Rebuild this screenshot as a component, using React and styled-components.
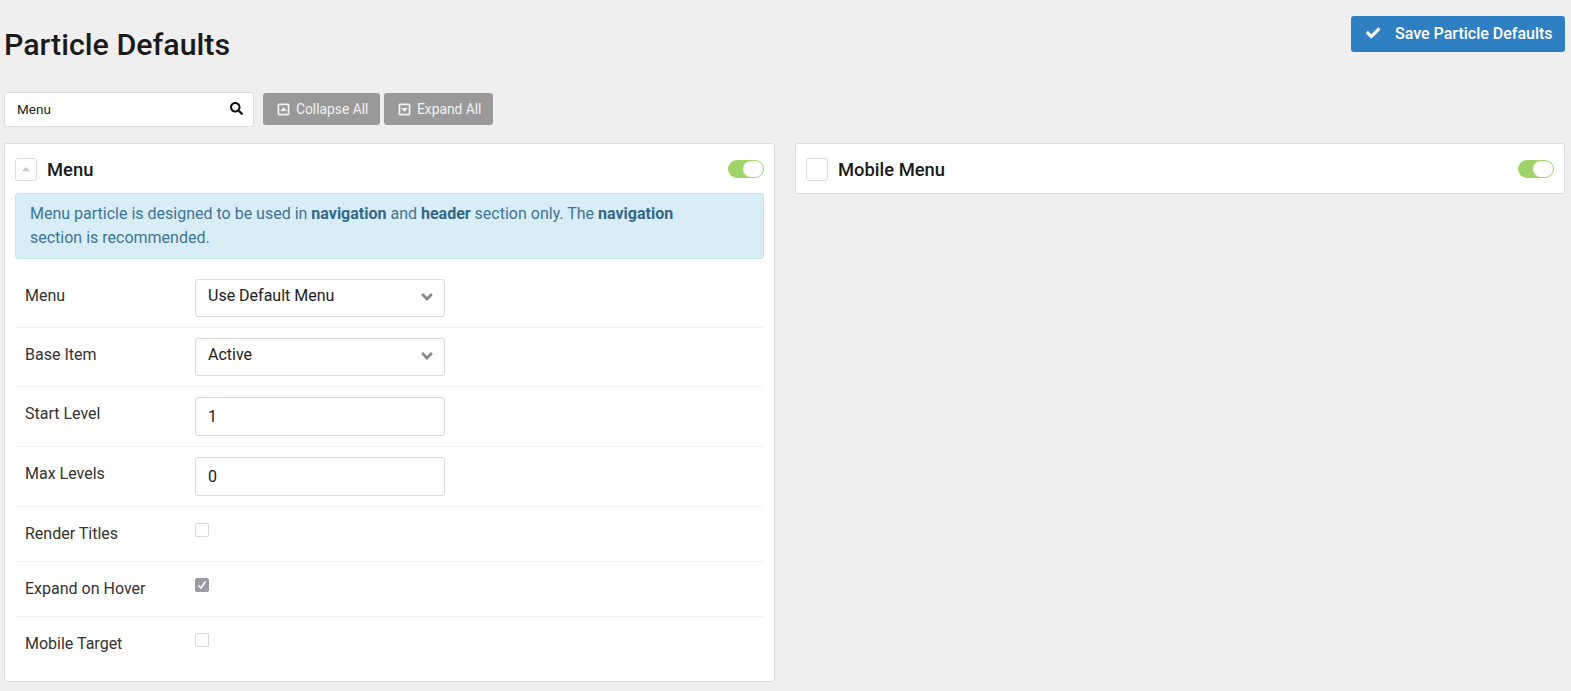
import React from "react";
import styled, { createGlobalStyle } from "styled-components";
import { FaCheck, FaSearch, FaRegCaretSquareUp, FaRegCaretSquareDown, FaCaretUp, FaAngleDown } from "react-icons/fa";

const Global = createGlobalStyle`
  html, body { margin: 0; padding: 0; background: #efefef; }
  body { font-family: Roboto, "Liberation Sans", sans-serif; color: #1a1a1a; }
  * { box-sizing: border-box; }
`;
const Page = styled.div`
  width: 1571px; height: 691px; overflow: hidden; padding: 16px 6px 0 4px;
`;
const TitleBar = styled.header`
  display: flex; justify-content: space-between; align-items: flex-start; height: 76px;
`;
const Title = styled.h1`
  margin: 12px 0 0; font-size: 30.4px; line-height: 34px; font-weight: 500; color: #1a1a1a;
`;
const SaveButton = styled.button`
  display: flex; align-items: center; width: 214px; height: 36px; padding: 0 12px 2px 15px;
  background: #2f7fc3; color: #fff; border: 0; border-radius: 3px;
  font: 500 16px Roboto, sans-serif; white-space: nowrap;
  svg { font-size: 14px; margin-right: 15px; stroke: currentColor; stroke-width: 20; }
`;
const Toolbar = styled.div`
  display: flex; align-items: flex-start; height: 35px; margin-bottom: 16px;
`;
const Search = styled.div`
  display: flex; justify-content: space-between; align-items: center; width: 250px; height: 35px;
  padding: 0 10px 2px 12px; background: #fff; border: 1px solid #dcdcdc; border-radius: 3px;
  font-size: 13.5px; color: #222; margin-right: 9px;
  svg { font-size: 13px; color: #111; }
`;
const GreyButton = styled.button`
  display: flex; align-items: center; gap: 6px; height: 32px; padding: 0 0 0 14px; margin: 1px 4px 0 0;
  width: ${p => p.$w}px; background: #999; color: #f1f1f1; border: 0; border-radius: 3px;
  font: 400 13.8px Roboto, sans-serif; white-space: nowrap;
  svg { font-size: 13px; stroke: currentColor; stroke-width: 20; }
`;
const Columns = styled.div`
  display: grid; grid-template-columns: 771px 770px; column-gap: 20px; align-items: start;
`;
const Panel = styled.section`
  background: #fff; border: 1px solid #dcdcdc; border-radius: 3px; padding: 0 10px;
  height: ${p => p.$h}px;
`;
const PanelHead = styled.div`
  display: flex; align-items: center; height: 49px; padding-top: 1px;
`;
const Collapse = styled.span`
  display: flex; align-items: center; justify-content: center; width: 22px; height: 23px; margin-right: 10px;
  border: 1px solid #ddd; border-radius: 3px; color: #c4c4c4; font-size: 12px;
`;
const PanelTitle = styled.h2`
  flex: 1; margin: 0; font-size: 18.4px; font-weight: 500; color: #1a1a1a;
`;
const Toggle = styled.span`
  position: relative; display: block; width: 36px; height: 18px; border-radius: 9px; background: #a0d468; margin-top: -1px;
  &::after {
    content: ""; position: absolute; right: 1px; top: 1px; width: 20px; height: 16px; border-radius: 8px; background: #fff;
  }
`;
const Alert = styled.div`
  height: 66px; padding: 8px 14px; background: #d8edf6; border: 1px solid #c6e4ea; border-radius: 3px;
  color: #3f7595; font-size: 16px; line-height: 24px;
  b { font-weight: 700; color: #33688a; }
`;
const Fields = styled.div`
  margin-top: 9px;
`;
const Row = styled.div`
  display: grid; grid-template-columns: 170px 1fr; align-items: start; padding: 0 0 0 10px;
  height: ${p => p.$h}px; padding-top: ${p => p.$top}px;
  border-bottom: ${p => (p.$last ? "0" : "1px solid #f1f1f1")};
`;
const Label = styled.label`
  font-size: 16px; line-height: 20px; color: #333; padding-top: ${p => p.$pt}px;
`;
const Field = styled.div`
  display: flex; align-items: ${p => (p.$sel ? "flex-start" : "center")}; justify-content: space-between;
  width: 250px; height: ${p => (p.$sel ? 38 : 39)}px; padding: ${p => (p.$sel ? "6px 8px 0 12px" : "0 12px")};
  border: 1px solid #d9d9d9; border-radius: 3px; background: #fff; font-size: 16px; color: #222;
  svg { font-size: 18px; color: #8a8a8a; margin-top: 2px; }
`;
const Check = styled.span`
  display: flex; align-items: center; justify-content: center; width: 14px; height: 14px; margin-top: 6px;
  border: 1px solid ${p => (p.$on ? "#9b9ba6" : "#d9d9d9")}; border-radius: 2px;
  background: ${p => (p.$on ? "#9b9ba6" : "#fff")};
  svg { width: 10px; height: 10px; fill: none; stroke: #fff; stroke-width: 1.6; }
`;

const rows = [
  { label: "Menu", h: 60, top: 11, pt: 7, sel: "Use Default Menu" },
  { label: "Base Item", h: 59, top: 10, pt: 7, sel: "Active" },
  { label: "Start Level", h: 60, top: 10, pt: 7, val: "1" },
  { label: "Max Levels", h: 60, top: 10, pt: 7, val: "0" },
  { label: "Render Titles", h: 55, top: 10, pt: 7, check: false },
  { label: "Expand on Hover", h: 55, top: 10, pt: 7, check: true },
  { label: "Mobile Target", h: 55, top: 10, pt: 7, check: false, last: true },
];

export default function App() {
  return (
    <Page>
      <Global />
      <TitleBar>
        <Title>Particle Defaults</Title>
        <SaveButton><FaCheck />Save Particle Defaults</SaveButton>
      </TitleBar>
      <Toolbar>
        <Search>Menu<FaSearch /></Search>
        <GreyButton $w={117}><FaRegCaretSquareUp />Collapse All</GreyButton>
        <GreyButton $w={109}><FaRegCaretSquareDown />Expand All</GreyButton>
      </Toolbar>
      <Columns>
        <Panel $h={539}>
          <PanelHead>
            <Collapse><FaCaretUp /></Collapse>
            <PanelTitle>Menu</PanelTitle>
            <Toggle />
          </PanelHead>
          <Alert>
            Menu particle is designed to be used in <b>navigation</b> and <b>header</b> section only. The <b>navigation</b><br />
            section is recommended.
          </Alert>
          <Fields>
            {rows.map(r => (
              <Row key={r.label} $h={r.h} $top={r.top} $last={r.last}>
                <Label $pt={r.pt}>{r.label}</Label>
                {r.sel && <Field $sel>{r.sel}<FaAngleDown /></Field>}
                {r.val && <Field>{r.val}</Field>}
                {r.check !== undefined && (
                  <Check $on={r.check}>
                    {r.check && <svg viewBox="0 0 10 10"><path d="M1.5 5.5 L4 8 L8.5 1.5" /></svg>}
                  </Check>
                )}
              </Row>
            ))}
          </Fields>
        </Panel>
        <Panel $h={51}>
          <PanelHead>
            <Collapse />
            <PanelTitle>Mobile Menu</PanelTitle>
            <Toggle />
          </PanelHead>
        </Panel>
      </Columns>
    </Page>
  );
}
